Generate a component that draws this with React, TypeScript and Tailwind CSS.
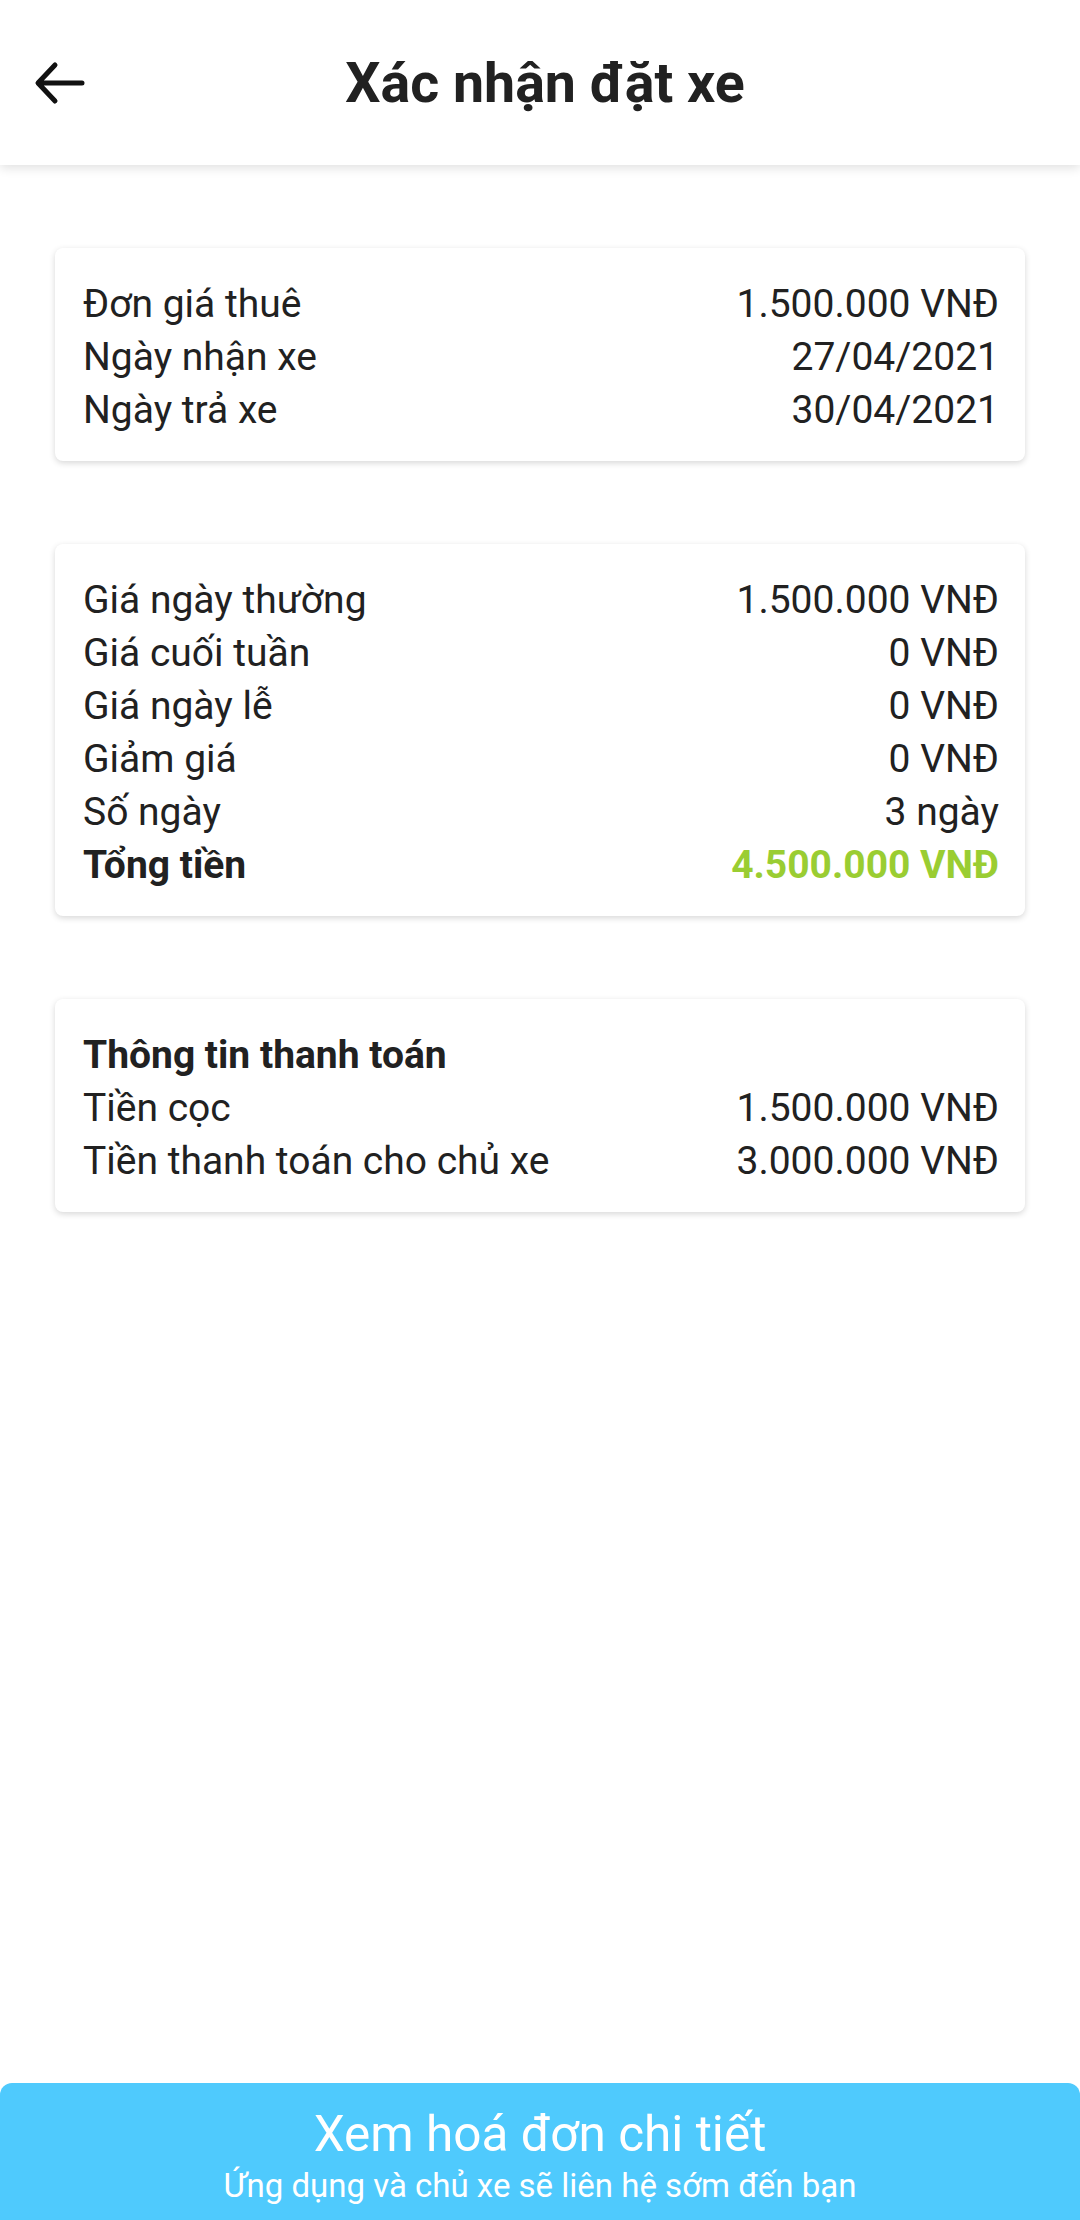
import React from "react";

const Row = ({ label, value, bold, valueClass }: { label: string; value?: string; bold?: boolean; valueClass?: string }) => (
  <div className={`flex justify-between items-center h-[53px] ${bold ? "font-bold" : ""}`}>
    <div>{label}</div>
    {value && <div className={valueClass}>{value}</div>}
  </div>
);

const Card = ({ children }: { children: React.ReactNode }) => (
  <div className="bg-white rounded-[8px] mx-[55px] pl-[28px] pr-[26px] pt-[30px] pb-[24px] shadow-[0_2px_6px_rgba(0,0,0,0.16)]">
    {children}
  </div>
);

const App = () => {
  return (
    <div
      className="w-[1080px] h-[2220px] bg-white flex flex-col text-[#212121] text-[39px] leading-[53px]"
      style={{ fontFamily: "Roboto, 'Noto Sans', sans-serif" }}
    >
      <div className="h-[165px] flex items-center relative bg-white shadow-[0_3px_10px_rgba(0,0,0,0.12)] z-10">
        <div className="absolute left-[33px] top-[60px]">
          <svg width="52" height="46" viewBox="0 0 52 46" fill="none">
            <path d="M49 23H6M22 5L5 23L22 41" stroke="#111" strokeWidth="5" strokeLinecap="round" strokeLinejoin="round" />
          </svg>
        </div>
        <div className="flex-1 text-center font-bold text-[55.5px] leading-none pl-[10px] pt-[2px]">Xác nhận đặt xe</div>
      </div>

      <div className="flex flex-col gap-[83px] pt-[83px]">
        <Card>
          <Row label="Đơn giá thuê" value="1.500.000 VNĐ" />
          <Row label="Ngày nhận xe" value="27/04/2021" />
          <Row label="Ngày trả xe" value="30/04/2021" />
        </Card>
        <Card>
          <Row label="Giá ngày thường" value="1.500.000 VNĐ" />
          <Row label="Giá cuối tuần" value="0 VNĐ" />
          <Row label="Giá ngày lễ" value="0 VNĐ" />
          <Row label="Giảm giá" value="0 VNĐ" />
          <Row label="Số ngày" value="3 ngày" />
          <Row label="Tổng tiền" value="4.500.000 VNĐ" bold valueClass="text-[#9acd32]" />
        </Card>
        <Card>
          <Row label="Thông tin thanh toán" bold />
          <Row label="Tiền cọc" value="1.500.000 VNĐ" />
          <Row label="Tiền thanh toán cho chủ xe" value="3.000.000 VNĐ" />
        </Card>
      </div>

      <div className="mt-auto h-[137px] bg-[#4fcafd] rounded-t-[12px] flex flex-col items-center justify-center pt-[8px] text-white">
        <div className="text-[49.5px] leading-[56px]">Xem hoá đơn chi tiết</div>
        <div className="text-[33px] leading-[40px] mt-[4px]">Ứng dụng và chủ xe sẽ liên hệ sớm đến bạn</div>
      </div>
    </div>
  );
};

export default App;
